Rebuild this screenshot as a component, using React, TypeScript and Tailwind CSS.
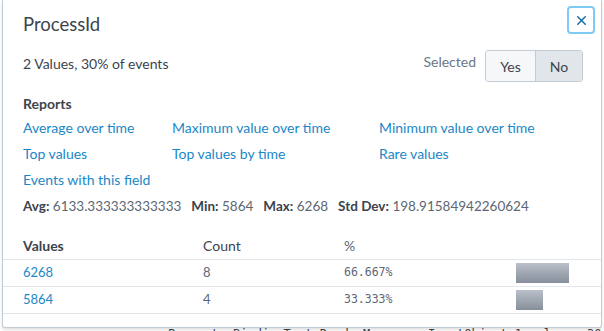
import { X } from 'lucide-react'

const reports = [
  ['Average over time', 'Maximum value over time', 'Minimum value over time'],
  ['Top values', 'Top values by time', 'Rare values'],
  ['Events with this field', '', ''],
]

const rows = [
  { value: '6268', count: 8, pct: 66.667 },
  { value: '5864', count: 4, pct: 33.333 },
]

function Stat({ label, value }: { label: string; value: string }) {
  return (
    <span className="mr-[10px]">
      <span className="font-bold text-[#3c444d]">{label}</span>{' '}
      <span className="text-[#5c6773]">{value}</span>
    </span>
  )
}

export default function App() {
  return (
    <div className="relative w-[604px] h-[331px] overflow-hidden bg-white font-['Lato',sans-serif] text-[14px] text-[#3c444d]">
      {/* text of the page behind the popover */}
      <div className="pt-[326px] pl-[168px] font-['DejaVu_Sans_Mono',monospace] text-[12px] leading-[16px] text-[#3c444d] whitespace-pre">
        ParameterBindingTest RandomM name   InputObject 1 value   30
      </div>

      {/* field popover */}
      <div className="absolute left-[2px] top-0 w-[600px] h-[328px] bg-white border-x border-b border-[#c3cbd4] rounded-b-[3px] shadow-[0_2px_3px_rgba(0,0,0,0.12)]">
        <div className="flex items-start justify-between pl-[20px] pt-[6px] pr-[6px]">
          <h1 className="mt-[8px] text-[18.5px] leading-[20px] text-[#3c444d]">ProcessId</h1>
          <button className="w-[28px] h-[28px] flex items-center justify-center rounded-[4px] border-2 border-[#7fcaf6] text-[#1a6ea8]">
            <X className="w-[15px] h-[15px]" strokeWidth={2.4} />
          </button>
        </div>

        <div className="flex items-start justify-between pl-[20px] pr-[18px] mt-[16px]">
          <div className="mt-[4px] leading-[20px]">2 Values, 30% of events</div>
          <div className="flex items-start gap-[9px]">
            <span className="mt-[2px] leading-[20px] text-[#6b7785]">Selected</span>
            <div className="flex h-[32px] rounded-[3px] border border-[#c3cbd4] overflow-hidden text-[#3c444d]">
              <button className="w-[50px] bg-[#f5f7f9] border-r border-[#c3cbd4]">Yes</button>
              <button className="w-[46px] bg-[#e1e6eb]">No</button>
            </div>
          </div>
        </div>

        <div className="pl-[20px] mt-[12px] leading-[20px] font-bold">Reports</div>
        <div className="pl-[20px] mt-[1px] grid grid-cols-[149px_207px_1fr] text-[#1a87c7]">
          {reports.flat().map((r, i) => (
            <a key={i} className="leading-[26px] cursor-pointer">
              {r}
            </a>
          ))}
        </div>

        <div className="pl-[20px] mt-[3px] text-[13.5px] leading-[20px] whitespace-nowrap">
          <Stat label="Avg:" value="6133.333333333333" />
          <Stat label="Min:" value="5864" />
          <Stat label="Max:" value="6268" />
          <Stat label="Std Dev:" value="198.91584942260624" />
        </div>

        <table className="mt-[16px] w-full border-collapse">
          <thead>
            <tr className="h-[27px] border-b border-[#e1e6eb]">
              <th className="w-[200px] pl-[20px] text-left font-bold">Values</th>
              <th className="w-[141px] text-left font-normal">Count</th>
              <th className="w-[172px] text-left font-normal text-[#5c6773]">%</th>
              <th />
            </tr>
          </thead>
          <tbody>
            {rows.map((r) => (
              <tr key={r.value} className="h-[27px] border-b border-[#e1e6eb] text-[13px]">
                <td className="pl-[20px] text-[#1a87c7]">{r.value}</td>
                <td className="text-[#5c6773]">{r.count}</td>
                <td className="font-['DejaVu_Sans_Mono',monospace] text-[11.5px] text-[#5c6773]">
                  {r.pct.toFixed(3)}%
                </td>
                <td>
                  <div
                    className="h-[20px] bg-gradient-to-b from-[#bac0c9] to-[#868f9b]"
                    style={{ width: `${Math.round((r.pct / 100) * 80)}px` }}
                  />
                </td>
              </tr>
            ))}
          </tbody>
        </table>
      </div>
    </div>
  )
}
